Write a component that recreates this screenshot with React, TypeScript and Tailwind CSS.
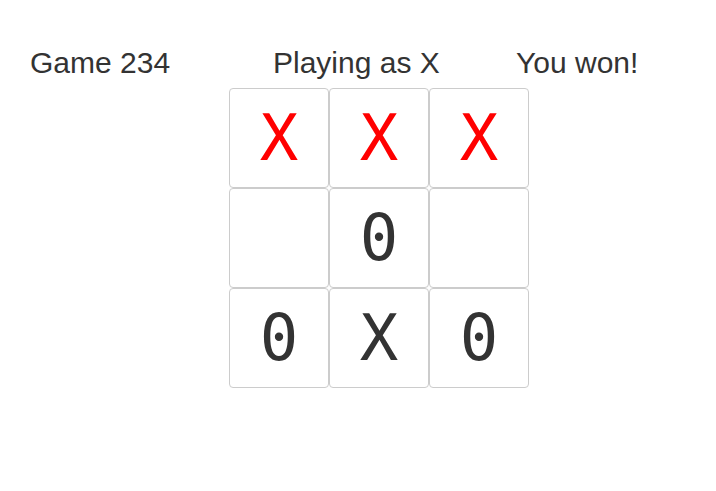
const board: string[] = ["X", "X", "X", "", "0", "", "0", "X", "0"];
const winning = [0, 1, 2];

export default function App() {
  return (
    <div className="min-h-screen bg-white text-[#333333]" style={{ fontFamily: '"Liberation Sans", Arial, sans-serif' }}>
      <div className="grid grid-cols-[243px_243px_auto] pl-[30px] pt-[46px] text-[30px] leading-[34px]">
        <div>Game 234</div>
        <div>Playing as X</div>
        <div>You won!</div>
      </div>
      <div className="ml-[229px] mt-[8px] grid w-[300px] grid-cols-[100px_100px_100px]">
        {board.map((v, i) => (
          <div
            key={i}
            className={`flex h-[100px] w-[100px] items-center justify-center rounded-[4px] border border-[#cccccc] text-[64px] leading-none ${
              winning.includes(i) ? "text-[#ff0000]" : "text-[#333333]"
            }`}
            style={{ fontFamily: '"DejaVu Sans Mono", monospace' }}
          >
            {v}
          </div>
        ))}
      </div>
    </div>
  );
}
